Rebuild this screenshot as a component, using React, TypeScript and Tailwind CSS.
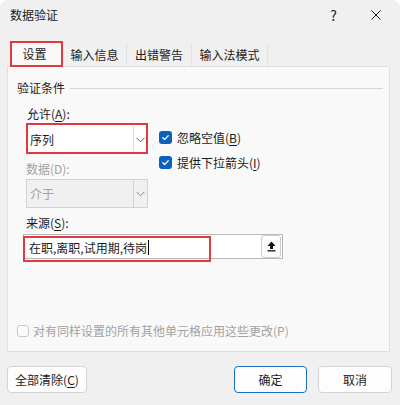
const font = { fontFamily: '"Noto Sans CJK SC", "Noto Sans", sans-serif' };

const Check = ({ checked, disabled }: { checked?: boolean; disabled?: boolean }) =>
  checked ? (
    <span className="flex h-[13px] w-[13px] items-center justify-center rounded-[3px] bg-[#0a62bd]">
      <svg width="9" height="9" viewBox="0 0 10 10" fill="none" stroke="#fff" strokeWidth="1.4" strokeLinecap="round" strokeLinejoin="round">
        <path d="M2 5.3l2 2 4-4.3" />
      </svg>
    </span>
  ) : (
    <span
      className={`block h-[12px] w-[12px] rounded-[3px] border bg-[#fbfbfb] ${
        disabled ? "border-[#c8c8c8]" : "border-[#8a8a8a]"
      }`}
    />
  );

const Chevron = ({ color }: { color: string }) => (
  <svg width="9" height="6" viewBox="0 0 9 6" fill="none" stroke={color} strokeWidth="1">
    <path d="M0.5 0.8l4 4 4-4" />
  </svg>
);

export default function App() {
  return (
    <div className="h-[405px] w-[400px] overflow-hidden rounded-t-[8px] bg-[#f0f0f0] text-[12px] leading-[16px] text-[#1b1b1b]" style={font}>
      {/* title bar */}
      <div className="flex h-[30px] items-center pl-[10px]">
        <span className="text-[12px]">数据验证</span>
        <span className="ml-auto mr-[34px] text-[14px]">?</span>
        <svg className="mr-[19px]" width="10" height="10" viewBox="0 0 10 10" stroke="#1b1b1b" strokeWidth="1">
          <path d="M0.5 0.5l9 9M9.5 0.5l-9 9" />
        </svg>
      </div>

      <div className="pl-[7px] pr-[8px]">
        {/* tabs */}
        <div className="relative z-10 mt-[11px] flex h-[25px] pl-[3px]">
          <div className="flex h-[26px] w-[53px] items-center justify-center border-2 border-[#e2383f] bg-[#f9f9f9] pr-[4px]">
            设置
          </div>
          <div className="mt-[2px] flex h-[23px] w-[64px] items-center justify-center border-r border-[#e2e2e2]">输入信息</div>
          <div className="mt-[2px] flex h-[23px] w-[65px] items-center justify-center border-r border-[#e2e2e2]">出错警告</div>
          <div className="mt-[2px] flex h-[23px] w-[76px] items-center justify-center border-r border-[#e2e2e2]">输入法模式</div>
        </div>

        {/* panel */}
        <div className="mr-[2px] flex h-[286px] flex-col border border-[#e0e0e0] bg-[#f9f9f9]">
          <div className="mt-[13px] flex items-center pl-[9px] pr-[6px]">
            <span>验证条件</span>
            <span className="ml-[5px] h-px flex-1 bg-[#d6d6d6]" />
          </div>

          <div className="mt-[10px] pl-[19px]">
            允许(<span className="underline underline-offset-2">A</span>):
          </div>

          <div className="mt-px flex pl-[18px]">
            <div className="flex flex-col">
              <div className="flex h-[31px] w-[122px] border-2 border-[#e2383f] bg-white">
                <span className="flex flex-1 items-center pl-[2px] pt-[2px]">序列</span>
                <span className="my-[1px] w-px bg-[#dcdcdc]" />
                <span className="flex w-[12px] items-center justify-center pt-[2px]">
                  <Chevron color="#555" />
                </span>
              </div>
              <div className="mt-[7px] text-[#a2a2a2]">数据(D):</div>
              <div className="mt-[2px] flex h-[29px] w-[122px] border border-[#d2d2d2] bg-[#f0f0f0]">
                <span className="flex flex-1 items-center pl-[3px] text-[#a2a2a2]">介于</span>
                <span className="w-px bg-[#d2d2d2]" />
                <span className="flex w-[13px] items-center justify-center">
                  <Chevron color="#888" />
                </span>
              </div>
            </div>

            <div className="ml-[11px] mt-[6px] flex flex-col gap-[8px]">
              <div className="flex h-[17px] items-center gap-[5px]">
                <Check checked />
                <span>
                  忽略空值(<span className="underline underline-offset-2">B</span>)
                </span>
              </div>
              <div className="flex h-[17px] items-center gap-[5px]">
                <Check checked />
                <span>
                  提供下拉箭头(<span className="underline underline-offset-2">I</span>)
                </span>
              </div>
            </div>
          </div>

          <div className="mt-[7px] pl-[18px]">
            来源(<span className="underline underline-offset-2">S</span>):
          </div>

          <div className="relative ml-[15px] mt-[3px] flex h-[25px] w-[260px] items-center border border-[#b8b8b8] bg-white">
            <span className="flex items-center pl-[5px] pt-[2px]">
              在职,离职,试用期,待岗
              <span className="ml-px inline-block h-[15px] w-px bg-black" />
            </span>
            <span className="ml-auto mr-px flex h-[23px] w-[20px] items-center justify-center rounded-[3px] border border-[#cfcfcf] bg-[#fdfdfd]">
              <svg width="9" height="11" viewBox="0 0 9 11" fill="#111">
                <path d="M4.5 0.5L8.5 5H6V8H3V5H0.5Z" />
                <rect x="0.5" y="9.2" width="8" height="1.3" />
              </svg>
            </span>
            <span className="pointer-events-none absolute left-[-1px] top-[1px] h-[26px] w-[188px] border-2 border-[#e2383f]" />
          </div>

          <div className="mb-[12px] mt-auto flex h-[17px] items-center gap-[4px] pl-[9px] text-[#a2a2a2]">
            <Check disabled />
            <span>对有同样设置的所有其他单元格应用这些更改(P)</span>
          </div>
        </div>

        {/* buttons */}
        <div className="mt-[14px] flex gap-[11px]">
          <button className="mr-auto flex h-[27px] w-[80px] items-center justify-center rounded-[4px] border border-[#d4d4d4] bg-[#fdfdfd]">
            全部清除(<span className="underline underline-offset-2">C</span>)
          </button>
          <button className="flex h-[27px] w-[73px] items-center justify-center rounded-[4px] border border-[#1a6fc4] bg-[#fdfdfd]">
            确定
          </button>
          <button className="flex h-[27px] w-[74px] items-center justify-center rounded-[4px] border border-[#d4d4d4] bg-[#fdfdfd]">
            取消
          </button>
        </div>
      </div>
    </div>
  );
}
